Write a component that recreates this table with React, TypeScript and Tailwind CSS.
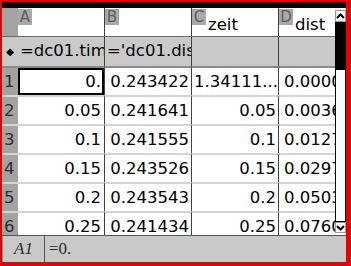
const rows = [
  { n: "1", a: "0.", b: "0.243422", c: "1.34111...", cLeft: true, d: "0.000063" },
  { n: "2", a: "0.05", b: "0.241641", c: "0.05", d: "0.003658" },
  { n: "3", a: "0.1", b: "0.241555", c: "0.1", d: "0.012723" },
  { n: "4", a: "0.15", b: "0.243526", c: "0.15", d: "0.029712" },
  { n: "5", a: "0.2", b: "0.243543", c: "0.2", d: "0.050321" },
  { n: "6", a: "0.25", b: "0.241434", c: "0.25", d: "0.076012" },
];

function ColHead({ letter, name }: { letter: string; name?: string }) {
  return (
    <div className="flex h-full">
      <div className="mt-[1px] w-[14px] h-[16px] bg-[#a9a9a9] text-[#5e5e5e] text-[15px] leading-[16px] text-center">
        {letter}
      </div>
      {name && (
        <span className="self-end mb-[2px] ml-[2px] text-[16.5px] leading-[19px] text-black">
          {name}
        </span>
      )}
    </div>
  );
}

function Chevron({ up }: { up?: boolean }) {
  return (
    <svg width="9" height="6" viewBox="0 0 9 6">
      <path
        d={up ? "M1 5 L4.5 1.5 L8 5" : "M1 1 L4.5 4.5 L8 1"}
        fill="none"
        stroke="#000"
        strokeWidth="2"
      />
    </svg>
  );
}

export default function App() {
  return (
    <div className="w-[351px] h-[266px] bg-[#e60000] pt-[2px] pl-[2px] pr-[5px] pb-[4px] flex flex-col font-['DejaVu_Sans',sans-serif]">
      {/* top strip */}
      <div className="h-[6px] bg-black shrink-0" />

      {/* sheet + scrollbar */}
      <div className="flex flex-1 min-h-0 bg-white">
        <div className="flex-1 overflow-hidden flex flex-col">
          {/* column headers */}
          <div className="flex h-[29px] shrink-0 border-b border-[#6a6a6a]">
            <div className="w-[16px] bg-[#a3a3a3]" />
            <div className="w-[87px] border-r border-[#404040]">
              <ColHead letter="A" />
            </div>
            <div className="w-[87px] border-r border-[#404040]">
              <ColHead letter="B" />
            </div>
            <div className="w-[87px] border-r border-[#404040]">
              <ColHead letter="C" name="zeit" />
            </div>
            <div className="flex-1">
              <ColHead letter="D" name="dist" />
            </div>
          </div>

          {/* formula row */}
          <div className="flex h-[29px] shrink-0 bg-[#c9c9c9] text-[16.5px] leading-[28px] text-black">
            <div className="w-[16px] flex items-center justify-center text-[10px] text-black">◆</div>
            <div className="w-[87px] border-r border-[#404040] overflow-hidden whitespace-nowrap pl-[2px]">
              =dc01.time
            </div>
            <div className="w-[87px] border-r border-[#404040] overflow-hidden whitespace-nowrap pl-[2px]">
              ='dc01.dist
            </div>
            <div className="w-[87px] border-r border-[#404040]" />
            <div className="flex-1" />
          </div>

          {/* data rows */}
          {rows.map((r) => {
            const line = r.n === "1" ? "border-t-[#8a8a8a]" : "border-t-[#d4d4d4]";
            return (
              <div
                key={r.n}
                className="flex h-[29px] shrink-0 text-[16.5px] leading-[27px] text-black"
              >
                <div className={`w-[16px] bg-[#a3a3a3] border-t-2 ${line} text-[#2e2e2e] pl-[2px]`}>
                  {r.n}
                </div>
                <div
                  className={
                    r.n === "1"
                      ? `w-[87px] border-r border-[#404040] border-t-2 ${line} text-right pr-[3px] ring-2 ring-inset ring-black`
                      : `w-[87px] border-r border-[#404040] border-t-2 ${line} text-right pr-[3px]`
                  }
                >
                  {r.a}
                </div>
                <div className={`w-[87px] border-r border-[#404040] border-t-2 ${line} text-right pr-[2px] overflow-hidden whitespace-nowrap`}>
                  {r.b}
                </div>
                <div
                  className={
                    r.cLeft
                      ? `w-[87px] border-r border-[#404040] border-t-2 ${line} pl-[2px] overflow-hidden whitespace-nowrap`
                      : `w-[87px] border-r border-[#404040] border-t-2 ${line} text-right pr-[2px] overflow-hidden whitespace-nowrap`
                  }
                >
                  {r.c}
                </div>
                <div className={`flex-1 border-t-2 ${line} pl-[5px] overflow-hidden whitespace-nowrap`}>
                  {r.d}
                </div>
              </div>
            );
          })}
        </div>

        {/* scrollbar */}
        <div className="w-[11px] shrink-0 flex flex-col pt-[2px] pb-[2px] bg-white">
          <div className="h-[12px] border border-[#9a9a9a] bg-white flex items-center justify-center">
            <Chevron up />
          </div>
          <div className="h-[48px] bg-black" />
          <div className="flex-1 border border-black border-t-0 bg-white" />
          <div className="h-[11px] border border-[#9a9a9a] bg-white flex items-center justify-center">
            <Chevron />
          </div>
        </div>
      </div>

      {/* entry line */}
      <div className="h-[27px] shrink-0 flex bg-[#c9c9c9] border-t border-[#555] font-['Liberation_Serif',serif] text-[17px] text-[#2a2a2a] leading-[26px]">
        <div className="w-[43px] border-r border-[#555] border-l border-l-[#8a8a8a] italic text-center">
          A1
        </div>
        <div className="pl-[4px]">=0.</div>
      </div>
    </div>
  );
}
